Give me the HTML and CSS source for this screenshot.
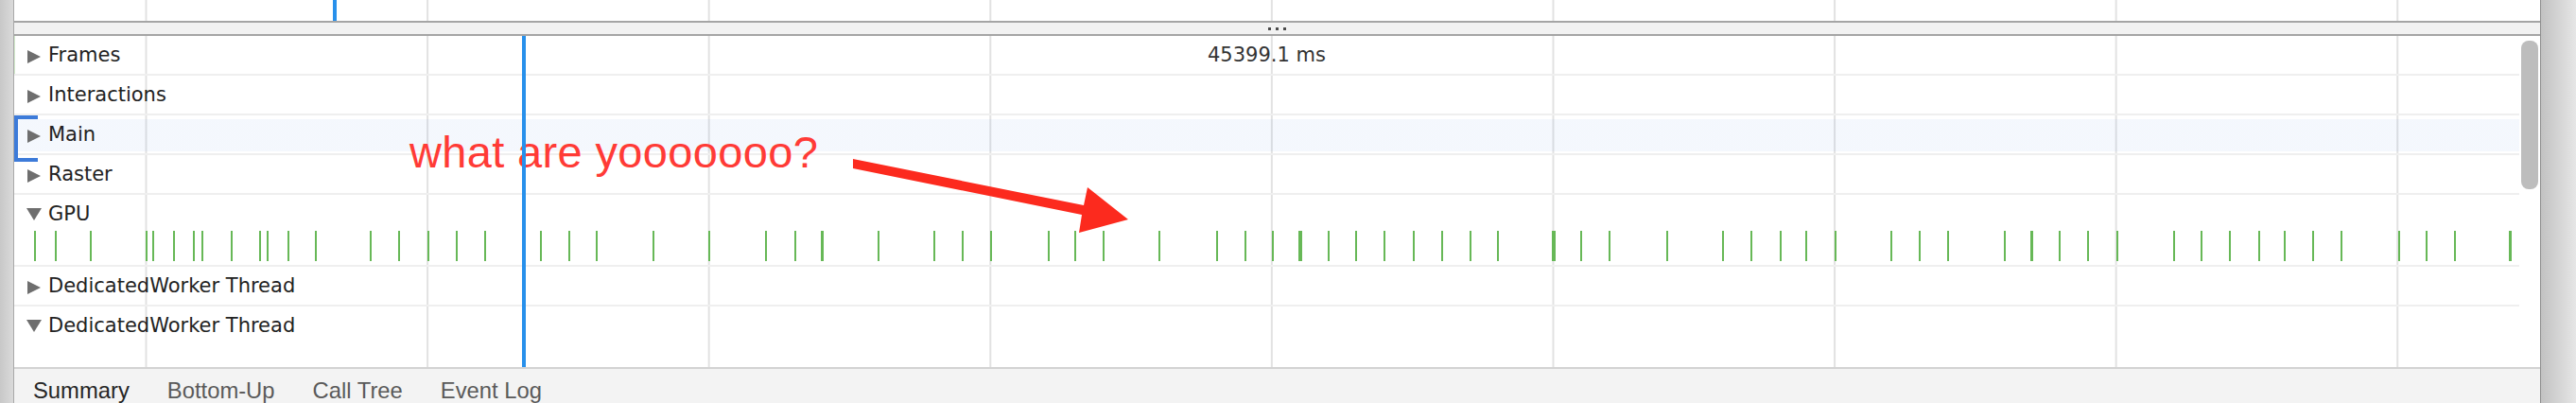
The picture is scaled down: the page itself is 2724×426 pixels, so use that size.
FILE: index.html
```html
<!DOCTYPE html>
<html>
<head>
<meta charset="utf-8">
<title>Performance</title>
<link rel="stylesheet" href="styles.css">
</head>
<body>
<div class="window">
  <div class="frame-left"></div>
  <div class="panel">
    <div class="overview grid"><div class="ov-marker"></div></div>
    <div class="resizer"><span class="dot"></span><span class="dot"></span><span class="dot"></span></div>
    <div class="flame">
      <div class="tracks grid">
        <div class="track frames"><span class="tri right"></span><span class="label">Frames</span><span class="frame-time">45399.1 ms</span></div>
        <div class="track"><span class="tri right"></span><span class="label">Interactions</span></div>
        <div class="track selected"><span class="tri right"></span><span class="label">Main</span></div>
        <div class="track"><span class="tri right"></span><span class="label">Raster</span></div>
        <div class="track gpu">
          <div class="track-head"><span class="tri down"></span><span class="label">GPU</span></div>
          <div class="ticks">
            <i style="left:21px"></i><i style="left:43px"></i><i style="left:80px"></i><i style="left:139px"></i><i style="left:146px"></i><i style="left:168px"></i><i style="left:189px"></i><i style="left:198px"></i><i style="left:229px"></i><i style="left:259px"></i><i style="left:267px"></i><i style="left:289px"></i><i style="left:318px"></i><i style="left:376px"></i><i style="left:406px"></i><i style="left:437px"></i><i style="left:467px"></i><i style="left:497px"></i><i style="left:556px"></i><i style="left:586px"></i><i style="left:615px"></i><i style="left:675px"></i><i style="left:734px"></i><i style="left:794px"></i><i style="left:825px"></i><i style="left:853px;width:3px"></i><i style="left:913px"></i><i style="left:972px"></i><i style="left:1002px"></i><i style="left:1032px"></i><i style="left:1093px"></i><i style="left:1121px"></i><i style="left:1151px"></i><i style="left:1210px"></i><i style="left:1271px"></i><i style="left:1301px"></i><i style="left:1330px"></i><i style="left:1358px;width:4px"></i><i style="left:1389px"></i><i style="left:1418px"></i><i style="left:1448px"></i><i style="left:1479px"></i><i style="left:1509px"></i><i style="left:1539px"></i><i style="left:1568px"></i><i style="left:1626px;width:4px"></i><i style="left:1656px"></i><i style="left:1686px"></i><i style="left:1747px"></i><i style="left:1806px"></i><i style="left:1836px"></i><i style="left:1867px"></i><i style="left:1894px"></i><i style="left:1925px"></i><i style="left:1984px"></i><i style="left:2014px"></i><i style="left:2044px"></i><i style="left:2104px"></i><i style="left:2132px;width:3px"></i><i style="left:2162px"></i><i style="left:2192px"></i><i style="left:2223px"></i><i style="left:2283px"></i><i style="left:2312px"></i><i style="left:2342px"></i><i style="left:2373px"></i><i style="left:2400px"></i><i style="left:2430px"></i><i style="left:2460px"></i><i style="left:2521px"></i><i style="left:2550px"></i><i style="left:2580px"></i><i style="left:2638px;width:3px"></i>
          </div>
        </div>
        <div class="track"><span class="tri right"></span><span class="label">DedicatedWorker Thread</span></div>
        <div class="track last"><span class="tri down"></span><span class="label">DedicatedWorker Thread</span></div>
        <div class="cursor"></div>
      </div>
      <div class="vscroll"><div class="thumb"></div></div>
    </div>
    <div class="tabs">
      <span class="tab active">Summary</span>
      <span class="tab">Bottom-Up</span>
      <span class="tab">Call Tree</span>
      <span class="tab">Event Log</span>
    </div>
  </div>
  <div class="frame-right"></div>
</div>
<div class="annotation">what are yooooooo?</div>
<svg class="arrow" width="2724" height="426" viewBox="0 0 2724 426">
  <polygon points="902,168 1146,217 1150,198 1193,232 1141,246 1144,227 902,178" fill="#fc2a1e"/>
</svg>
</body>
</html>
```

FILE: styles.css
```css
* { box-sizing: border-box; }
html, body { margin: 0; padding: 0; background: #fff; }
body {
  position: relative;
  width: 2724px;
  height: 426px;
  overflow: hidden;
  font-family: "DejaVu Sans", sans-serif;
}
.window { display: flex; height: 426px; }
.frame-left {
  flex: none;
  width: 15px;
  background: linear-gradient(to right, #c8c8c8, #dadada);
  border-right: 1px solid #a9a9a9;
}
.frame-right {
  flex: none;
  width: 38px;
  background: linear-gradient(to right, #c2c2c2, #e6e6e6);
  border-left: 1px solid #8e8e8e;
}
.panel { flex: 1; min-width: 0; display: flex; flex-direction: column; }

.grid {
  background-image: linear-gradient(to right, #e2e2e2 0, #e2e2e2 2px, transparent 2px);
  background-size: 297.6px 100%;
  background-position: 138.5px 0;
  background-repeat: repeat-x;
}
.overview { height: 22px; position: relative; flex: none; }
.ov-marker { position: absolute; left: 337px; top: 0; width: 4px; height: 22px; background: #2890eb; }

.resizer {
  flex: none;
  height: 16px;
  border-top: 2px solid #a5a5a5;
  border-bottom: 2px solid #a5a5a5;
  background: #f2f2f2;
  display: flex;
  align-items: center;
  justify-content: center;
  gap: 5px;
}
.dot { width: 3px; height: 3px; background: #4a4a4a; }

.flame { flex: none; height: 350px; display: flex; }
.tracks { flex: 1; position: relative; min-width: 0; }
.vscroll { flex: none; width: 22px; padding: 5px 2px 0 2px; }
.thumb { height: 157px; background: #bdbdbd; border-radius: 8px; }

.track {
  position: relative;
  display: flex;
  align-items: flex-start;
  height: 42px;
  padding-left: 14px;
  border-bottom: 2px solid #efefef;
  line-height: 40px;
}
.track.frames { box-shadow: inset 1px 0 0 #d3ebcc; }
.track.selected {
  background: linear-gradient(to bottom, transparent 4px, rgba(42,110,220,0.05) 4px, rgba(42,110,220,0.05) 38px, transparent 38px);
}
.track.selected::before {
  content: "";
  position: absolute;
  left: 0;
  top: 0;
  width: 21px;
  height: 41px;
  border: 4px solid #3d7bd9;
  border-right: 0;
}
.track.gpu { display: block; height: 76px; padding-left: 0; }
.track-head { display: flex; align-items: flex-start; height: 38px; padding-left: 14px; line-height: 40px; }
.track.last { height: 64px; border-bottom: 0; }

.label { font-size: 21px; color: #222; white-space: nowrap; }
.tri { flex: none; width: 0; height: 0; }
.tri.right {
  border-left: 14px solid #6e6e6e;
  border-top: 7px solid transparent;
  border-bottom: 7px solid transparent;
  margin-top: 15px;
  margin-right: 8px;
}
.tri.down {
  border-top: 13px solid #6e6e6e;
  border-left: 8px solid transparent;
  border-right: 8px solid transparent;
  margin-left: -1px;
  margin-top: 14px;
  margin-right: 7px;
}
.frame-time {
  position: absolute;
  left: 1262px;
  top: 0;
  font-size: 21px;
  line-height: 40px;
  color: #333;
  white-space: nowrap;
}
.ticks { position: relative; height: 32px; }
.ticks i { position: absolute; top: 0; width: 2px; height: 32px; background: #67b857; }

.cursor { position: absolute; left: 537px; top: 0; bottom: 0; width: 4px; background: #2890eb; z-index: 3; }

.tabs {
  flex: 1;
  display: flex;
  background: #f3f3f3;
  border-top: 2px solid #d3d3d3;
  font-family: "Liberation Sans", Arial, sans-serif;
}
.tab {
  padding: 9px 20px 0;
  font-size: 23.8px;
  line-height: 28px;
  color: #5a5a5a;
  white-space: nowrap;
}
.tab.active { color: #262626; }

.annotation {
  position: absolute;
  left: 433px;
  top: 137px;
  font-family: "Liberation Sans", Arial, sans-serif;
  font-size: 47px;
  line-height: 47px;
  letter-spacing: 0.35px;
  color: #ff3b36;
  white-space: nowrap;
  z-index: 2;
}
.arrow { position: absolute; left: 0; top: 0; z-index: 2; pointer-events: none; }
```
